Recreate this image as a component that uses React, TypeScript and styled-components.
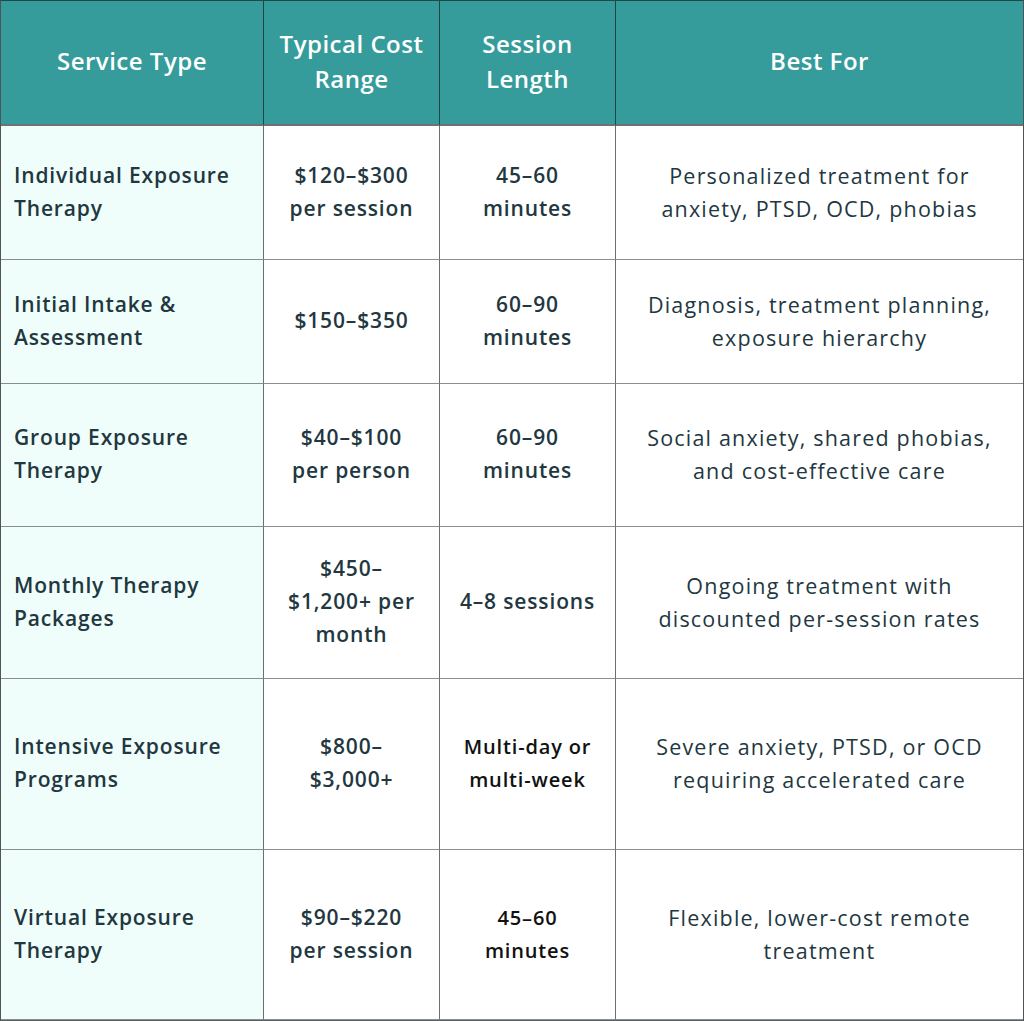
import * as React from 'react';
import styled, { createGlobalStyle } from 'styled-components';

const GlobalStyle = createGlobalStyle`
  html, body {
    margin: 0;
    padding: 0;
    background: #ffffff;
  }
  body {
    font-family: "Open Sans", "Liberation Sans", sans-serif;
  }
`;

type Row = {
  service: string;
  cost: string;
  length: string;
  bestFor: string;
  height: number;
  plainLength?: boolean;
};

// line breaks follow the reference layout
const rows: Row[] = [
  {
    service: 'Individual Exposure\nTherapy',
    cost: '$120–$300\nper session',
    length: '45–60\nminutes',
    bestFor: 'Personalized treatment for\nanxiety, PTSD, OCD, phobias',
    height: 134,
  },
  {
    service: 'Initial Intake &\nAssessment',
    cost: '$150–$350',
    length: '60–90\nminutes',
    bestFor: 'Diagnosis, treatment planning,\nexposure hierarchy',
    height: 124,
  },
  {
    service: 'Group Exposure\nTherapy',
    cost: '$40–$100\nper person',
    length: '60–90\nminutes',
    bestFor: 'Social anxiety, shared phobias,\nand cost-effective care',
    height: 143,
  },
  {
    service: 'Monthly Therapy\nPackages',
    cost: '$450–\n$1,200+ per\nmonth',
    length: '4–8 sessions',
    bestFor: 'Ongoing treatment with\ndiscounted per-session rates',
    height: 152,
  },
  {
    service: 'Intensive Exposure\nPrograms',
    cost: '$800–\n$3,000+',
    length: 'Multi-day or\nmulti-week',
    bestFor: 'Severe anxiety, PTSD, or OCD\nrequiring accelerated care',
    height: 171,
    plainLength: true,
  },
  {
    service: 'Virtual Exposure\nTherapy',
    cost: '$90–$220\nper session',
    length: '45–60\nminutes',
    bestFor: 'Flexible, lower-cost remote\ntreatment',
    height: 170,
    plainLength: true,
  },
];

const Table = styled.div`
  display: grid;
  grid-template-columns: 263px 176px 176px 1fr;
  width: 1024px;
  box-sizing: border-box;
  border-top: 1px solid #1f4a4c;
  border-left: 1px solid #4f5556;
  border-right: 1px solid #4f5556;
  border-bottom: 2px solid #5a6061;
`;

const HeadCell = styled.div<{ $last?: boolean }>`
  height: 125px;
  box-sizing: border-box;
  display: flex;
  align-items: center;
  justify-content: center;
  text-align: center;
  padding: 0 6px 4px;
  background: #369c9b;
  color: #ffffff;
  font-size: 24px;
  font-weight: 600;
  letter-spacing: 0.5px;
  line-height: 35px;
  white-space: pre-line;
  border-right: ${(p) => (p.$last ? 'none' : '1px solid #1d4546')};
  border-bottom: 2px solid #6d7373;
`;

const Cell = styled.div<{ $first?: boolean; $last?: boolean; $plain?: boolean; $h: number }>`
  height: ${(p) => p.$h}px;
  box-sizing: border-box;
  display: flex;
  align-items: center;
  justify-content: ${(p) => (p.$first ? 'flex-start' : 'center')};
  text-align: ${(p) => (p.$first ? 'left' : 'center')};
  padding: ${(p) => (p.$first ? '0 4px 2px 13px' : '0 2px 2px')};
  background: ${(p) => (p.$first ? '#effefb' : '#ffffff')};
  color: ${(p) => (p.$plain ? '#111111' : '#22373f')};
  font-size: ${(p) => (p.$plain ? '20px' : p.$last ? '21.5px' : '21px')};
  font-weight: ${(p) => (p.$last ? 400 : 600)};
  letter-spacing: ${(p) => (p.$last ? '1.2px' : '0.85px')};
  line-height: 33px;
  white-space: pre-line;
  border-right: ${(p) => (p.$last ? 'none' : '1px solid #6a6f70')};
  border-bottom: 1px solid #8a8e8f;
`;

export default function App() {
  return (
    <>
      <GlobalStyle />
      <Table>
        <HeadCell>{'Service Type'}</HeadCell>
        <HeadCell>{'Typical Cost\nRange'}</HeadCell>
        <HeadCell>{'Session\nLength'}</HeadCell>
        <HeadCell $last>{'Best For'}</HeadCell>
        {rows.map((r, i) => (
          <React.Fragment key={i}>
            <Cell $first $h={r.height}>{r.service}</Cell>
            <Cell $h={r.height}>{r.cost}</Cell>
            <Cell $h={r.height} $plain={r.plainLength}>{r.length}</Cell>
            <Cell $last $h={r.height}>{r.bestFor}</Cell>
          </React.Fragment>
        ))}
      </Table>
    </>
  );
}
